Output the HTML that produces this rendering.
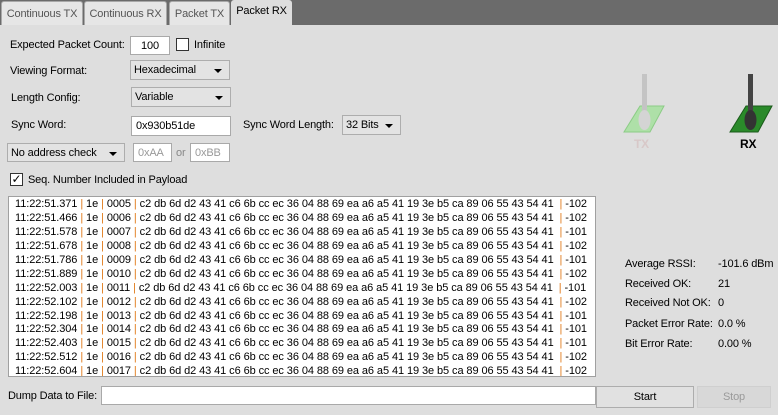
<!DOCTYPE html>
<html><head><meta charset="utf-8"><style>
*{margin:0;padding:0;box-sizing:border-box}
body{width:778px;height:415px;background:#dedede;font-family:"Liberation Sans",sans-serif;font-size:11px;letter-spacing:-0.15px;color:#000;position:relative;overflow:hidden}
.a{position:absolute;white-space:nowrap}
.tabbar{position:absolute;left:0;top:0;width:778px;height:25px;background:#6b6b6b}
.tab{position:absolute;top:1px;height:24px;background:#e6e6e6;border:1px solid #a8a8a8;border-bottom:none;border-radius:3px 3px 0 0;color:#555;font-size:11px;text-align:center;line-height:24px}
.act{top:0;height:26px;background:#dedede;color:#000;border:none;line-height:22px}
.in{position:absolute;background:#fff;border:1px solid #a9a9a9;padding-left:4px;line-height:18px}
.dd{position:absolute;background:#e3e3e3;border:1px solid #adadad;padding-left:3px;line-height:19px}
.dd:after{content:"";position:absolute;right:7px;top:8px;border-left:4px solid transparent;border-right:4px solid transparent;border-top:4px solid #000}
.log{position:absolute;left:8px;top:196px;width:588px;height:181px;background:#fff;border:1px solid #a0a0a0;overflow:hidden;font-size:11px;padding:1px 0 0 6px}
.log div{height:13.95px;line-height:13.95px;white-space:nowrap;letter-spacing:-0.09px}
.log b{font-weight:normal;color:#e07a1a}
.btn{position:absolute;background:#e1e1e1;border:1px solid #adadad;text-align:center;line-height:20px}
</style></head><body>
<div class="tabbar"></div>
<div class="tab" style="left:1px;width:82px">Continuous TX</div>
<div class="tab" style="left:84px;width:83px">Continuous RX</div>
<div class="tab" style="left:169px;width:61px">Packet TX</div>
<div class="tab act" style="left:231px;width:61px">Packet RX</div>

<div class="a" style="left:10px;top:39px">Expected Packet Count:</div>
<div class="in" style="left:130px;top:36px;width:40px;height:19px;text-align:center;padding:0">100</div>
<div class="a" style="left:176px;top:38px;width:13px;height:13px;border:1px solid #333;background:#fff"></div>
<div class="a" style="left:194px;top:39px">Infinite</div>

<div class="a" style="left:10px;top:65px">Viewing Format:</div>
<div class="dd" style="left:130px;top:60px;width:100px;height:20px">Hexadecimal</div>
<div class="a" style="left:11px;top:92px">Length Config:</div>
<div class="dd" style="left:131px;top:87px;width:100px;height:20px">Variable</div>

<div class="a" style="left:11px;top:119px">Sync Word:</div>
<div class="in" style="left:131px;top:116px;width:100px;height:20px">0x930b51de</div>
<div class="a" style="left:243px;top:119px">Sync Word Length:</div>
<div class="dd" style="left:342px;top:115px;width:59px;height:20px">32 Bits</div>

<div class="dd" style="left:7px;top:143px;width:118px;height:19px;line-height:18px">No address check</div>
<div class="in" style="left:133px;top:143px;width:39px;height:19px;color:#999">0xAA</div>
<div class="a" style="left:176px;top:147px;color:#888">or</div>
<div class="in" style="left:190px;top:143px;width:40px;height:19px;color:#999">0xBB</div>

<div class="a" style="left:10px;top:173px;width:13px;height:13px;border:1px solid #333;background:#fff;font-size:12px;line-height:11px;text-align:center">&#10003;</div>
<div class="a" style="left:28px;top:174px">Seq. Number Included in Payload</div>

<svg class="a" style="left:620px;top:72px" width="50" height="78" viewBox="0 0 50 78">
<polygon points="20,34 44,34 30,60 4,60" fill="#aee0a8" stroke="#8ccc86"/>
<rect x="22" y="2" width="5" height="40" fill="#c4c4c4"/>
<ellipse cx="24.5" cy="48" rx="6" ry="10" fill="#d4d4d4"/>
<text x="14" y="76" font-family="Liberation Sans" font-size="12" font-weight="bold" fill="#d8c8c8">TX</text>
</svg>
<svg class="a" style="left:728px;top:72px" width="50" height="78" viewBox="0 0 50 78">
<polygon points="18,34 44,34 30,60 2,60" fill="#2a8a2a" stroke="#1a5a1a"/>
<rect x="20" y="2" width="5" height="40" fill="#444"/>
<ellipse cx="22.5" cy="48" rx="6" ry="10" fill="#333"/>
<text x="12" y="76" font-family="Liberation Sans" font-size="12" font-weight="bold" fill="#000">RX</text>
</svg>

<div class="log">
<div>11:22:51.371 <b>|</b> 1e <b>|</b> 0005 <b>|</b> c2 db 6d d2 43 41 c6 6b cc ec 36 04 88 69 ea a6 a5 41 19 3e b5 ca 89 06 55 43 54 41 &nbsp;<b>|</b> -102</div>
<div>11:22:51.466 <b>|</b> 1e <b>|</b> 0006 <b>|</b> c2 db 6d d2 43 41 c6 6b cc ec 36 04 88 69 ea a6 a5 41 19 3e b5 ca 89 06 55 43 54 41 &nbsp;<b>|</b> -102</div>
<div>11:22:51.578 <b>|</b> 1e <b>|</b> 0007 <b>|</b> c2 db 6d d2 43 41 c6 6b cc ec 36 04 88 69 ea a6 a5 41 19 3e b5 ca 89 06 55 43 54 41 &nbsp;<b>|</b> -101</div>
<div>11:22:51.678 <b>|</b> 1e <b>|</b> 0008 <b>|</b> c2 db 6d d2 43 41 c6 6b cc ec 36 04 88 69 ea a6 a5 41 19 3e b5 ca 89 06 55 43 54 41 &nbsp;<b>|</b> -102</div>
<div>11:22:51.786 <b>|</b> 1e <b>|</b> 0009 <b>|</b> c2 db 6d d2 43 41 c6 6b cc ec 36 04 88 69 ea a6 a5 41 19 3e b5 ca 89 06 55 43 54 41 &nbsp;<b>|</b> -101</div>
<div>11:22:51.889 <b>|</b> 1e <b>|</b> 0010 <b>|</b> c2 db 6d d2 43 41 c6 6b cc ec 36 04 88 69 ea a6 a5 41 19 3e b5 ca 89 06 55 43 54 41 &nbsp;<b>|</b> -102</div>
<div>11:22:52.003 <b>|</b> 1e <b>|</b> 0011 <b>|</b> c2 db 6d d2 43 41 c6 6b cc ec 36 04 88 69 ea a6 a5 41 19 3e b5 ca 89 06 55 43 54 41 &nbsp;<b>|</b> -101</div>
<div>11:22:52.102 <b>|</b> 1e <b>|</b> 0012 <b>|</b> c2 db 6d d2 43 41 c6 6b cc ec 36 04 88 69 ea a6 a5 41 19 3e b5 ca 89 06 55 43 54 41 &nbsp;<b>|</b> -102</div>
<div>11:22:52.198 <b>|</b> 1e <b>|</b> 0013 <b>|</b> c2 db 6d d2 43 41 c6 6b cc ec 36 04 88 69 ea a6 a5 41 19 3e b5 ca 89 06 55 43 54 41 &nbsp;<b>|</b> -101</div>
<div>11:22:52.304 <b>|</b> 1e <b>|</b> 0014 <b>|</b> c2 db 6d d2 43 41 c6 6b cc ec 36 04 88 69 ea a6 a5 41 19 3e b5 ca 89 06 55 43 54 41 &nbsp;<b>|</b> -101</div>
<div>11:22:52.403 <b>|</b> 1e <b>|</b> 0015 <b>|</b> c2 db 6d d2 43 41 c6 6b cc ec 36 04 88 69 ea a6 a5 41 19 3e b5 ca 89 06 55 43 54 41 &nbsp;<b>|</b> -101</div>
<div>11:22:52.512 <b>|</b> 1e <b>|</b> 0016 <b>|</b> c2 db 6d d2 43 41 c6 6b cc ec 36 04 88 69 ea a6 a5 41 19 3e b5 ca 89 06 55 43 54 41 &nbsp;<b>|</b> -102</div>
<div>11:22:52.604 <b>|</b> 1e <b>|</b> 0017 <b>|</b> c2 db 6d d2 43 41 c6 6b cc ec 36 04 88 69 ea a6 a5 41 19 3e b5 ca 89 06 55 43 54 41 &nbsp;<b>|</b> -102</div>
</div>

<div class="a" style="left:625px;top:258px">Average RSSI:</div><div class="a" style="left:718px;top:258px">-101.6 dBm</div>
<div class="a" style="left:625px;top:278px">Received OK:</div><div class="a" style="left:718px;top:278px">21</div>
<div class="a" style="left:625px;top:297px">Received Not OK:</div><div class="a" style="left:718px;top:297px">0</div>
<div class="a" style="left:625px;top:318px">Packet Error Rate:</div><div class="a" style="left:718px;top:318px">0.0 %</div>
<div class="a" style="left:625px;top:338px">Bit Error Rate:</div><div class="a" style="left:718px;top:338px">0.00 %</div>

<div class="a" style="left:8px;top:390px">Dump Data to File:</div>
<div class="in" style="left:101px;top:386px;width:495px;height:19px"></div>
<div class="btn" style="left:596px;top:386px;width:98px;height:22px">Start</div>
<div class="btn" style="left:697px;top:386px;width:74px;height:22px;color:#9a9a9a;background:#d8d8d8;border-color:#cfcfcf">Stop</div>
</body></html>
